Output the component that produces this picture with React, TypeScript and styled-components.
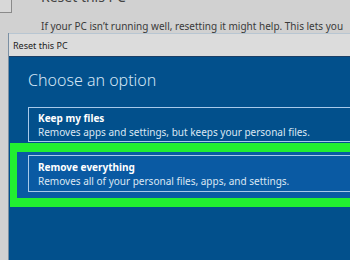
import React from "react";
import styled, { createGlobalStyle } from "styled-components";

const Global = createGlobalStyle`
  html, body { margin: 0; padding: 0; background: #d1d1d1; }
  body { font-family: "Noto Sans", "Open Sans", sans-serif; }
`;

const Screen = styled.div`
  width: 350px;
  height: 260px;
  overflow: hidden;
  background: #d1d1d1;
`;

const PageHead = styled.div`
  height: 33px;
  display: flex;
  overflow: hidden;
`;

const NavBox = styled.div`
  width: 11px;
  height: 12px;
  border-right: 1px solid #8a8a8a;
  border-bottom: 1px solid #8a8a8a;
  background: #d8d8d8;
  flex: none;
`;

const PageText = styled.div`
  margin-left: 29px;
  display: flex;
  flex-direction: column;
  white-space: nowrap;
  color: #3a3a3a;
`;

const PageTitle = styled.div`
  font-size: 14px;
  line-height: 19px;
  margin-top: -13px;
  color: #444;
`;

const PageParagraph = styled.div`
  font-size: 10px;
  line-height: 14px;
  margin-top: 13px;
`;

const Dialog = styled.div`
  margin-left: 8px;
  width: 380px;
  border-left: 1px solid #7a8fa3;
`;

const TitleBar = styled.div`
  height: 22px;
  background: #dcdcdc;
  border-top: 1px solid #b8c6d2;
  display: flex;
  align-items: center;
  padding-left: 4px;
  font-size: 9px;
  color: #222;
`;

const Body = styled.div`
  background: #02508c;
  border-top: 1px solid #1c3f66;
  height: 220px;
  display: flex;
  flex-direction: column;
`;

const Heading = styled.div`
  font-size: 16px;
  font-weight: 300;
  color: #d4e5f5;
  line-height: 22px;
  padding: 12px 0 0 19px;
`;

const OptionRow = styled.div`
  padding-left: 19px;
  margin-top: 16px;
`;

const Highlight = styled.div`
  margin-left: 1px;
  margin-top: 1px;
  border-top: 9px solid #22ef30;
  border-bottom: 9px solid #22ef30;
  border-left: 7px solid #22ef30;
  background: #0a5aa3;
  padding: 3px 0 6px 11px;
`;

const OptionBox = styled.div<{ $tall?: boolean }>`
  border: 1px solid #a8c9ea;
  border-right: none;
  padding: ${(p) => (p.$tall ? "5px 0 3px 9px" : "4px 0 2px 9px")};
  display: flex;
  flex-direction: column;
  white-space: nowrap;
`;

const OptionTitle = styled.div`
  font-size: 10px;
  font-weight: 700;
  color: #ffffff;
  line-height: 13px;
`;

const OptionDesc = styled.div`
  font-size: 10px;
  color: #dbe7f3;
  line-height: 14px;
`;

export default function App() {
  return (
    <Screen>
      <Global />
      <PageHead>
        <NavBox />
        <PageText>
          <PageTitle>Reset this PC</PageTitle>
          <PageParagraph>
            If your PC isn’t running well, resetting it might help. This lets you
          </PageParagraph>
        </PageText>
      </PageHead>
      <Dialog>
        <TitleBar>Reset this PC</TitleBar>
        <Body>
          <Heading>Choose an option</Heading>
          <OptionRow>
            <OptionBox>
              <OptionTitle>Keep my files</OptionTitle>
              <OptionDesc>Removes apps and settings, but keeps your personal files.</OptionDesc>
            </OptionBox>
          </OptionRow>
          <Highlight>
            <OptionBox $tall>
              <OptionTitle>Remove everything</OptionTitle>
              <OptionDesc>Removes all of your personal files, apps, and settings.</OptionDesc>
            </OptionBox>
          </Highlight>
        </Body>
      </Dialog>
    </Screen>
  );
}
